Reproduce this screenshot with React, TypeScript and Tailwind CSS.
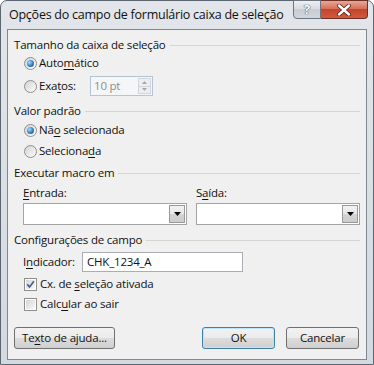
import React from "react"

function U({ children }: { children: React.ReactNode }) {
  return <span className="underline decoration-1 underline-offset-[2px]">{children}</span>
}

function Radio({ on }: { on?: boolean }) {
  return (
    <span className="flex h-[13px] w-[13px] shrink-0 items-center justify-center rounded-full border border-[#8e8f8f] bg-[linear-gradient(135deg,#d2d2d2,#fdfdfd)]">
      {on && <span className="h-[7px] w-[7px] rounded-full bg-[radial-gradient(circle_at_35%_35%,#a9dcf9,#2a77b9_60%,#174f86)]" />}
    </span>
  )
}

function Check({ on }: { on?: boolean }) {
  return (
    <span className="flex h-[13px] w-[13px] shrink-0 items-center justify-center border border-[#8e8f8f] bg-white p-px">
      <span className="flex h-full w-full items-center justify-center bg-[linear-gradient(135deg,#d6d6d6,#f8f8f8)]">
        {on && (
          <svg width="9" height="9" viewBox="0 0 9 9">
            <path d="M1.2 4.4 L3.6 6.9 L7.9 1.2" stroke="#4a5f8f" strokeWidth="1.7" fill="none" />
          </svg>
        )}
      </span>
    </span>
  )
}

function Group({ title }: { title: string }) {
  return (
    <div className="flex h-[20px] items-center gap-[4px]">
      <span>{title}</span>
      <div className="h-px flex-1 bg-[#d5d5d5]" />
    </div>
  )
}

function Combo() {
  return (
    <div className="flex h-[22px] w-[164px] items-center border border-[#a4a4a4] bg-white pr-[1px]">
      <div className="flex-1" />
      <div className="flex h-[18px] w-[16px] items-center justify-center border border-[#9a9a9a] bg-[linear-gradient(#f2f2f2,#e6e6e6_50%,#d4d4d4_50%,#cbcbcb)]">
        <svg width="7" height="4" viewBox="0 0 7 4"><path d="M0 0 H7 L3.5 4 Z" fill="#000" /></svg>
      </div>
    </div>
  )
}

const btn = "flex h-[22px] items-center justify-center rounded-[3px] border bg-[linear-gradient(#f2f2f2,#ebebeb_50%,#dddddd_50%,#cfcfcf)]"

export default function App() {
  return (
    <div className="h-[365px] w-[374px] bg-white font-['Open_Sans',sans-serif] text-[11.5px] tracking-[-0.2px] text-[#111]">
      <div className="flex h-[365px] w-[374px] flex-col rounded-t-[7px] border border-[#5b6670] bg-[linear-gradient(#e2e6ea,#d3d9df)] pb-[4px]">
        {/* title bar */}
        <div className="flex h-[28px] items-start justify-between">
          <span className="pl-[8px] pt-[5px] text-[12.5px] tracking-[-0.25px]">Opções do campo de formulário caixa de seleção</span>
          <div className="mr-[5px] flex h-[19px] -mt-px">
            <div className="flex w-[28px] items-center justify-center rounded-bl-[4px] border border-[#6d7680] bg-[linear-gradient(#eef0f2,#d5dae0_50%,#c6cdd5_50%,#cfd6de)] text-[13px] font-bold text-white [text-shadow:0_0_1px_#333,0_0_1px_#333]">?</div>
            <div className="flex w-[47px] items-center justify-center rounded-br-[4px] border border-l-0 border-[#6b3028] bg-[linear-gradient(#e9a896,#d7705a_45%,#c6442b_50%,#d05a3d)]">
              <svg width="14" height="12" viewBox="0 0 14 12">
                <path d="M2 1.5 L12 10.5 M12 1.5 L2 10.5" stroke="#5a2018" strokeWidth="4" strokeLinecap="round" />
                <path d="M2 1.5 L12 10.5 M12 1.5 L2 10.5" stroke="#fff" strokeWidth="2.4" strokeLinecap="round" />
              </svg>
            </div>
          </div>
        </div>

        {/* client */}
        <div className="mx-[6px] flex flex-1 flex-col border border-[#7e8893] bg-[#f0f0f0] px-[6px]">
          <div className="mt-[5px]"><Group title="Tamanho da caixa de seleção" /></div>
          <div className="flex h-[16px] items-center gap-[2px] pl-[10px]">
            <Radio on />
            <span>Auto<U>m</U>ático</span>
          </div>
          <div className="mt-[5px] flex h-[20px] items-center pl-[10px]">
            <div className="flex w-[66px] items-center gap-[2px]">
              <Radio />
              <span>Exa<U>t</U>os:</span>
            </div>
            <div className="flex h-[20px] w-[63px] items-center border border-[#b4c4d4] bg-[#f4f6f8] pl-[3px] pr-[1px] text-[#8d8d8d]">
              <span className="flex-1">10 pt</span>
              <div className="flex h-[16px] w-[13px] flex-col border border-[#d0d6dc] bg-[#eceef0]">
                <div className="flex flex-1 items-center justify-center border-b border-[#d0d6dc]">
                  <svg width="5" height="3" viewBox="0 0 5 3"><path d="M0 3 L2.5 0 L5 3 Z" fill="#a8a8a8" /></svg>
                </div>
                <div className="flex flex-1 items-center justify-center">
                  <svg width="5" height="3" viewBox="0 0 5 3"><path d="M0 0 H5 L2.5 3 Z" fill="#a8a8a8" /></svg>
                </div>
              </div>
            </div>
          </div>

          <div className="mt-[5px]"><Group title="Valor padrão" /></div>
          <div className="mt-[1px] flex h-[16px] items-center gap-[2px] pl-[10px]">
            <Radio on />
            <span>Nã<U>o</U> selecionada</span>
          </div>
          <div className="mt-[5px] flex h-[16px] items-center gap-[2px] pl-[10px]">
            <Radio />
            <span>Seleciona<U>d</U>a</span>
          </div>

          <div className="mt-[4px]"><Group title="Executar macro em" /></div>
          <div className="mt-[2px] flex h-[16px] items-center pl-[9px]">
            <span className="w-[173px]"><U>E</U>ntrada:</span>
            <span>S<U>a</U>ída:</span>
          </div>
          <div className="mt-[2px] flex gap-[9px] pl-[9px]">
            <Combo />
            <Combo />
          </div>

          <div className="mt-[5px]"><Group title="Configurações de campo" /></div>
          <div className="mt-[2px] flex h-[20px] items-center pl-[9px]">
            <span className="w-[59px]">I<U>n</U>dicador:</span>
            <div className="flex h-[20px] w-[161px] items-center border border-[#abadb3] bg-white pl-[4px]">CHK_1234_A</div>
          </div>
          <div className="mt-[4px] flex h-[16px] items-center gap-[3px] pl-[10px]">
            <Check on />
            <span>Cx. de <U>s</U>eleção ativada</span>
          </div>
          <div className="mt-[4px] flex h-[16px] items-center gap-[3px] pl-[10px]">
            <Check />
            <span>Calc<U>u</U>lar ao sair</span>
          </div>

          <div className="mt-[15px] flex items-center justify-between">
            <div className={`${btn} w-[101px] border-[#707070]`}>Te<U>x</U>to de ajuda...</div>
            <div className="flex gap-[11px] pr-[1px]">
              <div className={`${btn} w-[73px] border-[#3c7fb1] shadow-[inset_0_0_0_1px_#bfe3fa]`}>OK</div>
              <div className={`${btn} w-[73px] border-[#707070]`}>Cancelar</div>
            </div>
          </div>
        </div>
      </div>
    </div>
  )
}
